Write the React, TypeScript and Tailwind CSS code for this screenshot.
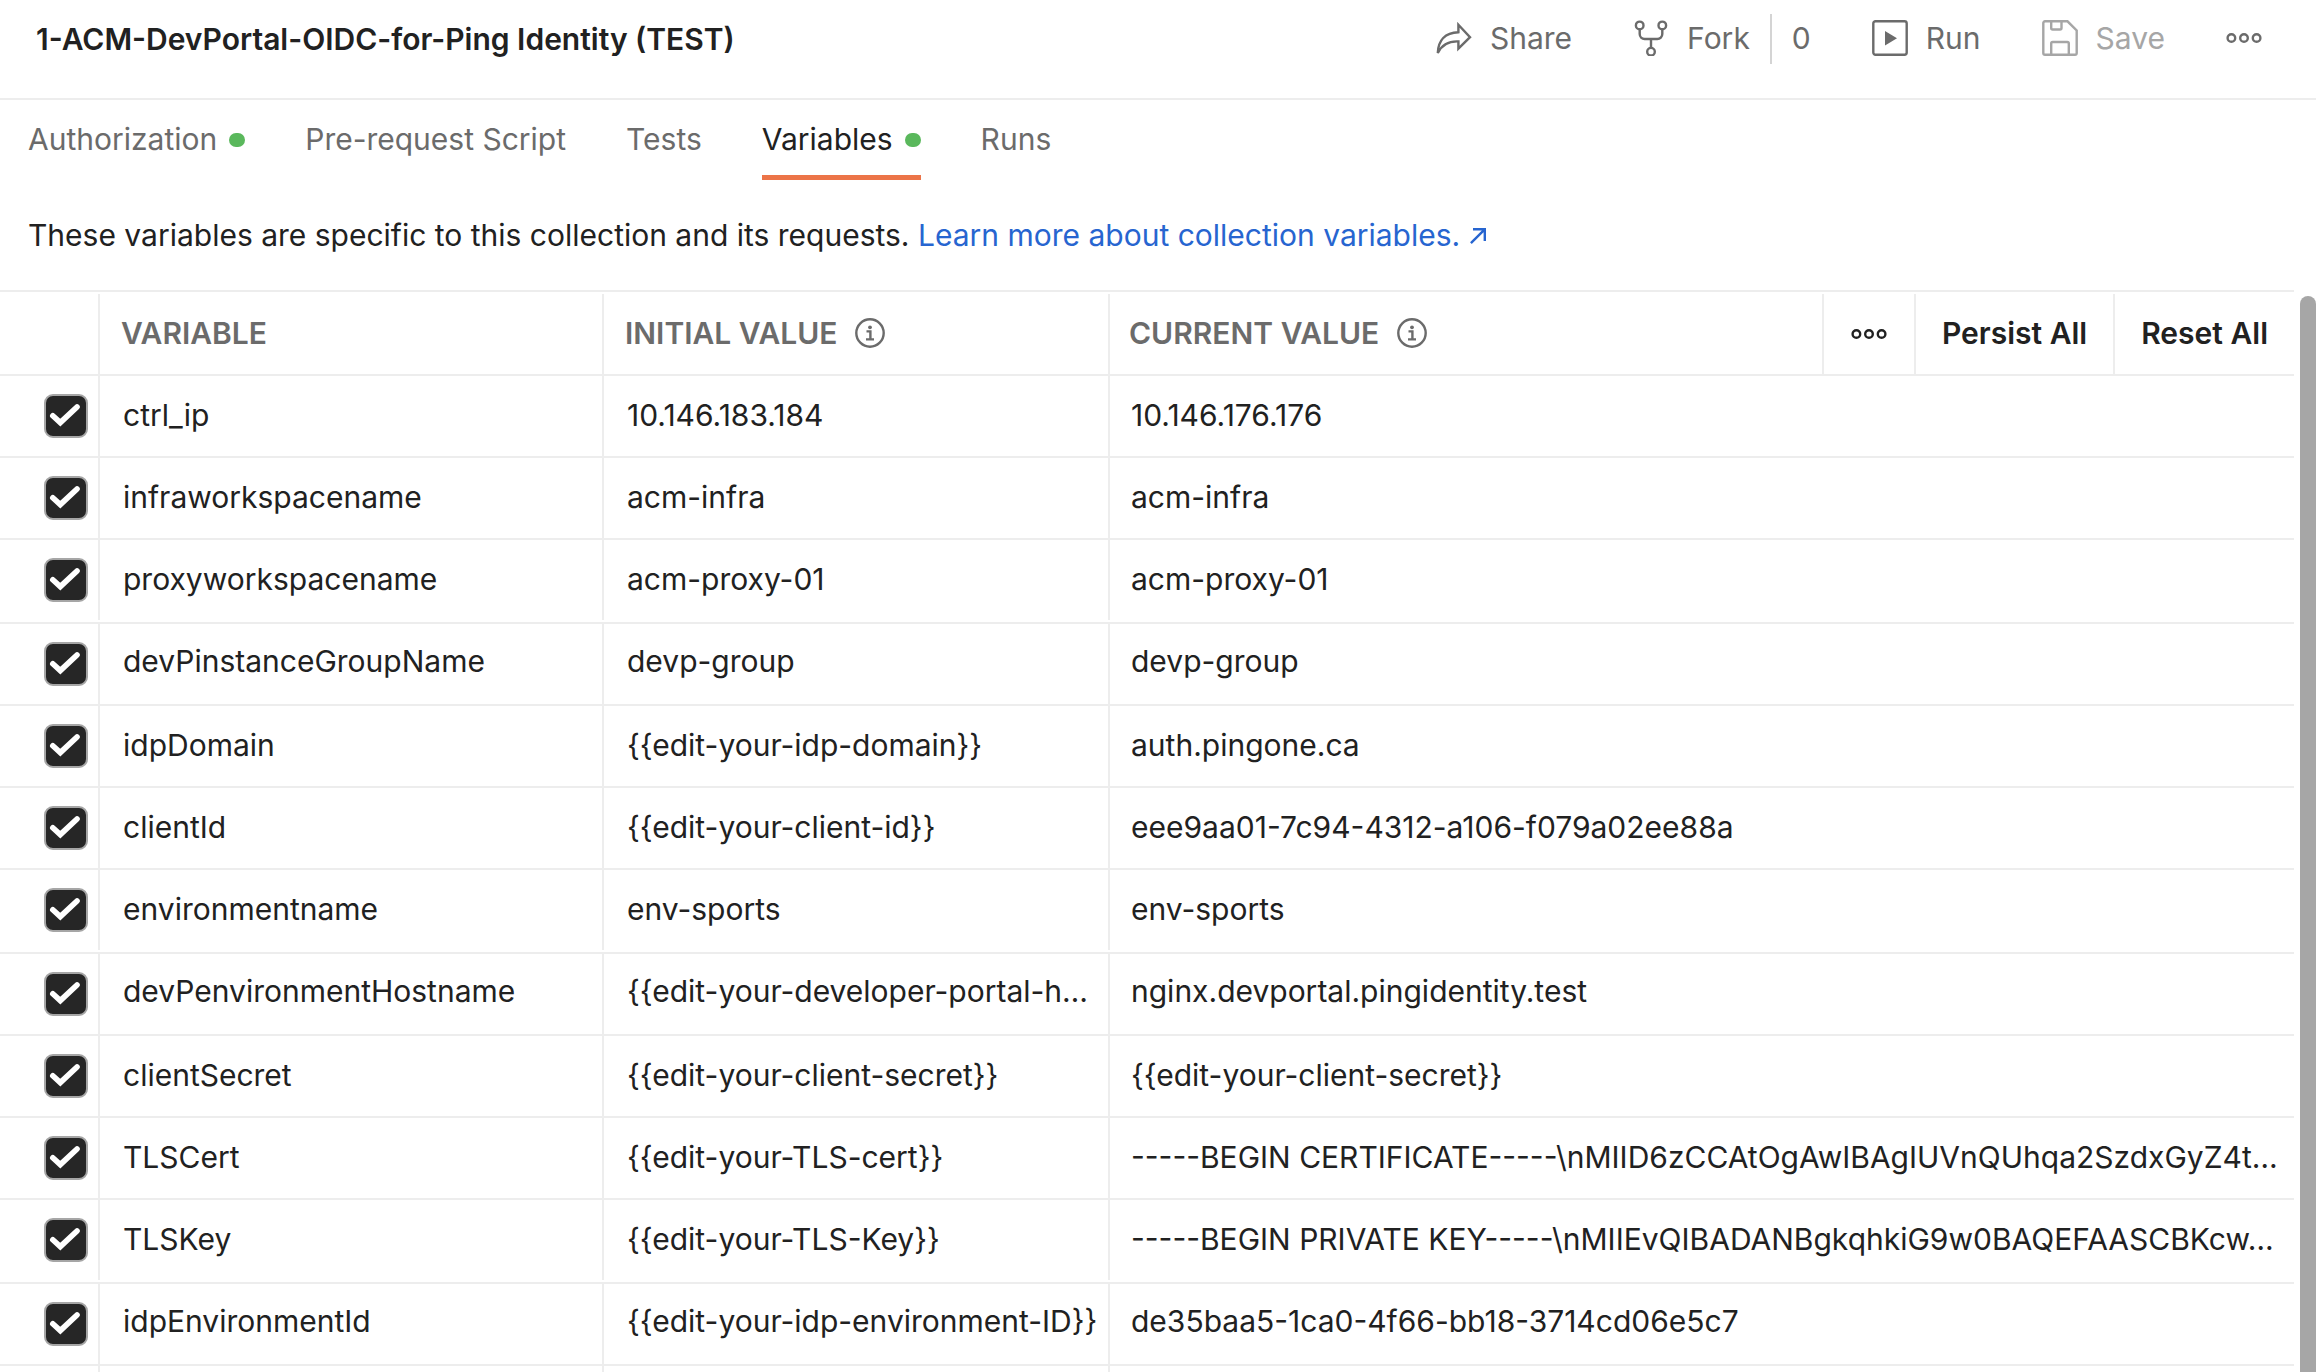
import { useState } from "react";
import type { ReactNode } from "react";

type Variable = { name: string; initial: string; current: string };

const variables: Variable[] = [
  { name: "ctrl_ip", initial: "10.146.183.184", current: "10.146.176.176" },
  { name: "infraworkspacename", initial: "acm-infra", current: "acm-infra" },
  { name: "proxyworkspacename", initial: "acm-proxy-01", current: "acm-proxy-01" },
  { name: "devPinstanceGroupName", initial: "devp-group", current: "devp-group" },
  { name: "idpDomain", initial: "{{edit-your-idp-domain}}", current: "auth.pingone.ca" },
  { name: "clientId", initial: "{{edit-your-client-id}}", current: "eee9aa01-7c94-4312-a106-f079a02ee88a" },
  { name: "environmentname", initial: "env-sports", current: "env-sports" },
  { name: "devPenvironmentHostname", initial: "{{edit-your-developer-portal-h…", current: "nginx.devportal.pingidentity.test" },
  { name: "clientSecret", initial: "{{edit-your-client-secret}}", current: "{{edit-your-client-secret}}" },
  { name: "TLSCert", initial: "{{edit-your-TLS-cert}}", current: "-----BEGIN CERTIFICATE-----\\nMIID6zCCAtOgAwIBAgIUVnQUhqa2SzdxGyZ4t…" },
  { name: "TLSKey", initial: "{{edit-your-TLS-Key}}", current: "-----BEGIN PRIVATE KEY-----\\nMIIEvQIBADANBgkqhkiG9w0BAQEFAASCBKcw…" },
  { name: "idpEnvironmentId", initial: "{{edit-your-idp-environment-ID}}", current: "de35baa5-1ca0-4f66-bb18-3714cd06e5c7" },
];

const tabs = [
  { label: "Authorization", dot: true },
  { label: "Pre-request Script", dot: false },
  { label: "Tests", dot: false },
  { label: "Variables", dot: true },
  { label: "Runs", dot: false },
];

function Icon({ children }: { children: ReactNode }) {
  return (
    <svg viewBox="0 0 36 36" className="size-9 shrink-0" fill="none" stroke="currentColor" strokeWidth="2.4" aria-hidden="true">
      {children}
    </svg>
  );
}

function ShareIcon() {
  return (
    <Icon>
      <path d="M22.4 4.8 34 17.2 22.4 28.6V21.4C13 21 6 24.5 1.8 33 2.2 20.5 9 12.6 22.4 12.2Z" />
    </Icon>
  );
}

function ForkIcon() {
  return (
    <Icon>
      <circle cx="6.7" cy="5.4" r="3.8" />
      <circle cx="29.3" cy="5.4" r="3.8" />
      <circle cx="18" cy="31.7" r="3.8" />
      <path d="M6.7 9.2V14a5 5 0 0 0 5 5H24.3a5 5 0 0 0 5-5V9.2M18 19v8.9" />
    </Icon>
  );
}

function RunIcon() {
  return (
    <Icon>
      <rect x="1.3" y="1.3" width="33.4" height="33.4" rx="2.2" />
      <path d="M13 11v14.5l12-7.25Z" fill="currentColor" stroke="none" />
    </Icon>
  );
}

function SaveIcon() {
  return (
    <Icon>
      <path d="M3 1.3H25.5L34.7 10.5V33a1.7 1.7 0 0 1-1.7 1.7H3A1.7 1.7 0 0 1 1.300 33V3A1.7 1.7 0 0 1 3 1.300Z" />
      <path d="M9.200 1.300V8a1.500 1.500 0 0 0 1.500 1.500H18A1.500 1.500 0 0 0 19.500 8V1.300M9.200 34.700V23.500A1.500 1.500 0 0 1 10.700 22H25.300A1.500 1.500 0 0 1 26.800 23.500V34.700" />
    </Icon>
  );
}

function DotsIcon() {
  return (
    <Icon>
      <circle cx="5.4" cy="18" r="3.8" />
      <circle cx="18" cy="18" r="3.8" />
      <circle cx="30.6" cy="18" r="3.8" />
    </Icon>
  );
}

function InfoIcon() {
  return (
    <svg viewBox="0 0 30 30" className="size-[30px] shrink-0" fill="none" stroke="currentColor" strokeWidth="2.4" aria-hidden="true">
      <circle cx="15" cy="15" r="13.7" />
      <path d="M11.500 13.400H15.400V21.400M11 21.400H19" />
      <circle cx="15" cy="9.300" r="1.900" fill="currentColor" stroke="none" />
    </svg>
  );
}

function VariableRow({ variable }: { variable: Variable }) {
  const [enabled, setEnabled] = useState(true);
  return (
    <tr className="h-[82px] align-top leading-[78px] nth-[4n]:leading-[75px] nth-[4n+3]:h-[84px]">
      <td className="border-b-2 border-[#ededed] p-0">
        <div className="flex h-20 items-center justify-end border-r-2 border-[#ededed] pr-2.5">
          <label className="grid size-11">
            <input
              type="checkbox"
              checked={enabled}
              onChange={(e) => setEnabled(e.target.checked)}
              aria-label={variable.name}
              className="peer col-start-1 row-start-1 size-11 appearance-none rounded-[9px] border-2 border-[#a6a6a6] bg-white checked:bg-[#262626]"
            />
            <svg viewBox="0 0 44 44" className="pointer-events-none invisible col-start-1 row-start-1 size-11 peer-checked:visible" fill="none" stroke="#fff" strokeWidth="5.6" strokeLinecap="round" strokeLinejoin="miter" aria-hidden="true">
              <path d="M8.8 21.8 16.3 28.6 33 13" />
            </svg>
          </label>
        </div>
      </td>
      <td className="border-b-2 border-[#ededed] p-0">
        <div className="h-20 truncate border-r-2 border-[#ededed] pr-2 pl-[23px]">{variable.name}</div>
      </td>
      <td className="border-b-2 border-[#ededed] p-0">
        <div className="h-20 truncate border-r-2 border-[#ededed] pr-2 pl-[23px]">{variable.initial}</div>
      </td>
      <td className="border-b-2 border-[#ededed] p-0">
        <div className="h-20 truncate pr-2 pl-[21px]">{variable.current}</div>
      </td>
    </tr>
  );
}

export default function App() {
  const [active, setActive] = useState("Variables");
  return (
    <div className="flex h-screen flex-col overflow-hidden bg-white font-['Inter',sans-serif] text-[30px] leading-9 text-[#212121]">
      <header className="flex items-center justify-between border-b-2 border-[#ededed] pt-3.5 pr-[54px] pb-[34px] pl-9">
        <h1 className="font-semibold">1-ACM-DevPortal-OIDC-for-Ping Identity (TEST)</h1>
        <div className="flex items-center gap-[61px] text-[#6b6b6b]">
          <button type="button" className="flex items-center gap-[18px] pb-0.5"><ShareIcon />Share</button>
          <div className="flex items-center gap-5">
            <button type="button" className="flex items-center gap-[18px] pb-0.5"><ForkIcon />Fork</button>
            <div className="h-[50px] w-0.5 bg-[#d4d4d4]" />
            <button type="button" className="pb-0.5">0</button>
          </div>
          <button type="button" className="flex items-center gap-[18px] pb-0.5"><RunIcon />Run</button>
          <button type="button" disabled className="flex items-center gap-[18px] pb-0.5 text-[#a6a6a6]"><SaveIcon />Save</button>
          <button type="button" aria-label="More actions" className="pb-0.5"><DotsIcon /></button>
        </div>
      </header>

      <nav className="flex gap-[60px] px-7">
        {tabs.map((tab) => (
          <button
            key={tab.label}
            type="button"
            onClick={() => setActive(tab.label)}
            className={
              tab.label === active
                ? "flex items-center gap-3 border-b-[5px] border-[#ec7448] pt-[21px] pb-[18px]"
                : "flex items-center gap-3 border-b-[5px] border-transparent pt-[21px] pb-[18px] text-[#6b6b6b]"
            }
          >
            {tab.label}
            {tab.dot && <span className="mt-0.5 h-3.5 w-4 rounded-[7px] bg-[#5ab85c]" />}
          </button>
        ))}
      </nav>

      <p className="px-7 py-[37px]">
        These variables are specific to this collection and its requests.{" "}
        <a href="#learn" className="text-[#2765d0]">
          Learn more about collection variables.
          <svg viewBox="0 0 16 16" className="mb-0.5 ml-2.5 inline-block size-4 align-baseline" fill="none" stroke="currentColor" strokeWidth="2.4" aria-hidden="true">
            <path d="M.9 15.1 14.200 1.800M3 1.200H14.800V13" />
          </svg>
        </a>
      </p>

      <main className="flex min-h-0 flex-1 gap-1.5">
        <div className="min-w-0 flex-1 overflow-hidden border-t-2 border-[#ededed]">
          <table className="w-full table-fixed border-separate border-spacing-0 text-left">
            <colgroup>
              <col className="w-[100px]" />
              <col className="w-[504px]" />
              <col className="w-[506px]" />
              <col />
            </colgroup>
            <thead className="text-[#6b6b6b]">
              <tr>
                <th className="border-b-2 border-[#ededed] p-0 pt-0.5" aria-label="Enabled">
                  <div className="h-20 border-r-2 border-[#ededed]" />
                </th>
                <th className="border-b-2 border-[#ededed] p-0 pt-0.5 font-semibold">
                  <div className="flex h-20 items-center border-r-2 border-[#ededed] pb-0.5 pl-[21px]">VARIABLE</div>
                </th>
                <th className="border-b-2 border-[#ededed] p-0 pt-0.5 font-semibold">
                  <div className="flex h-20 items-center gap-[18px] border-r-2 border-[#ededed] pb-0.5 pl-[21px]">INITIAL VALUE<InfoIcon /></div>
                </th>
                <th className="border-b-2 border-[#ededed] p-0 pt-0.5 font-semibold">
                  <div className="flex h-20 items-stretch">
                    <div className="flex flex-1 items-center gap-[18px] pb-0.5 pl-[19px]">CURRENT VALUE<InfoIcon /></div>
                    <div className="flex items-stretch text-[#212121]">
                      <button type="button" aria-label="More options" className="border-l-2 border-[#ededed] px-[27px]"><DotsIcon /></button>
                      <button type="button" className="border-l-2 border-[#ededed] px-[26px] pb-0.5">Persist All</button>
                      <button type="button" className="border-l-2 border-[#ededed] px-[26px] pb-0.5">Reset All</button>
                    </div>
                  </div>
                </th>
              </tr>
            </thead>
            <tbody>
              {variables.map((v) => (
                <VariableRow key={v.name} variable={v} />
              ))}
              <tr>
                <td className="p-0"><div className="h-20 border-r-2 border-[#ededed]" /></td>
                <td className="p-0"><div className="h-20 border-r-2 border-[#ededed]" /></td>
                <td className="p-0"><div className="h-20 border-r-2 border-[#ededed]" /></td>
                <td className="p-0" />
              </tr>
            </tbody>
          </table>
        </div>
        <div className="mt-1.5 w-4 rounded-t-lg bg-[#a6a6a6]" />
      </main>
    </div>
  );
}
